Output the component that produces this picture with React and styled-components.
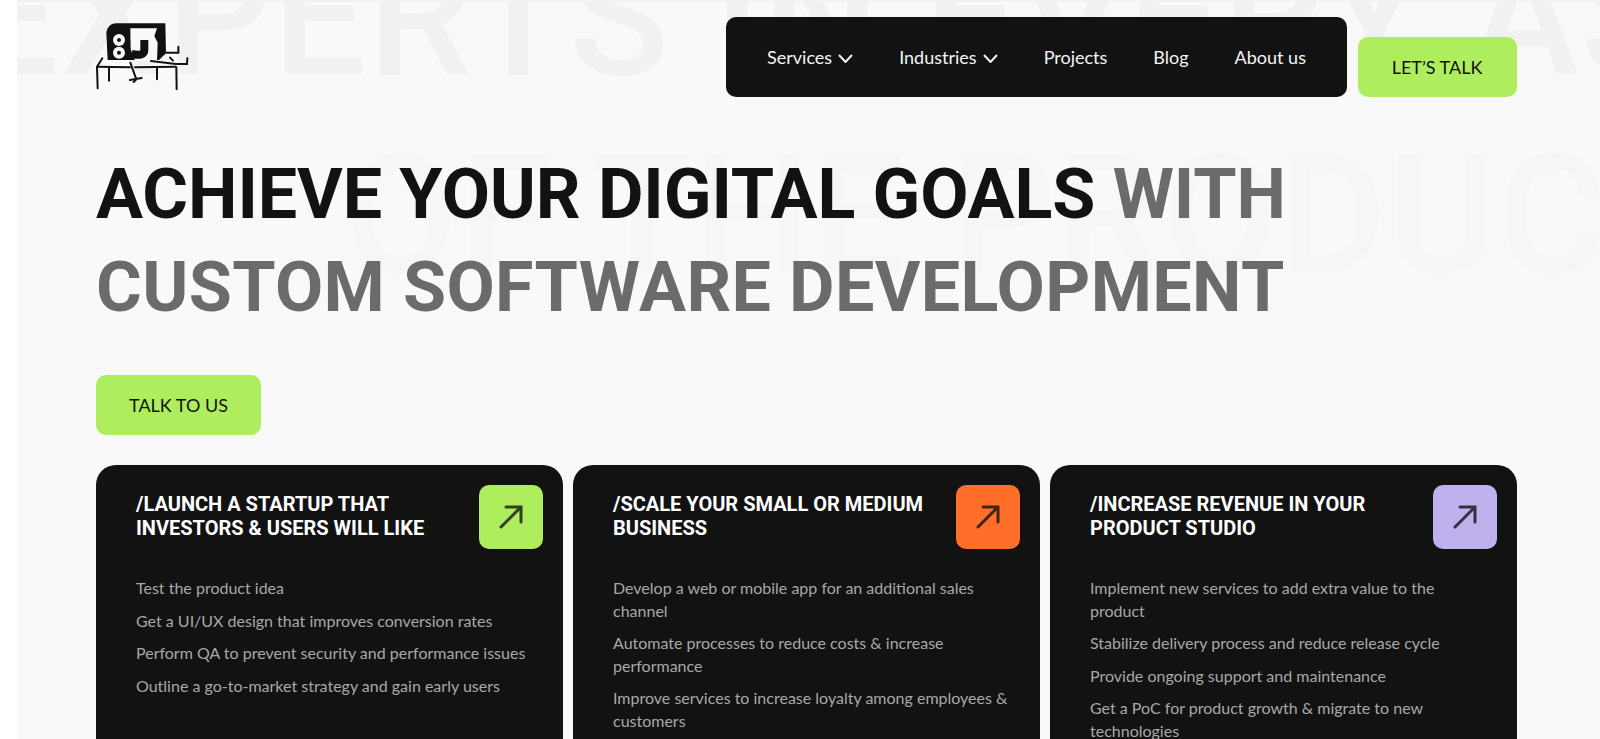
import React from "react";
import styled, { createGlobalStyle } from "styled-components";

const GlobalStyle = createGlobalStyle`
  html, body {
    margin: 0;
    padding: 0;
    height: 100%;
    background: #fff;
    overflow: hidden;
  }
  #root {
    height: 100%;
  }
  * {
    box-sizing: border-box;
  }
`;

const cards = [
  {
    title: "/LAUNCH A STARTUP THAT INVESTORS & USERS WILL LIKE",
    color: "#aeee5e",
    items: [
      "Test the product idea",
      "Get a UI/UX design that improves conversion rates",
      "Perform QA to prevent security and performance issues",
      "Outline a go-to-market strategy and gain early users",
    ],
  },
  {
    title: "/SCALE YOUR SMALL OR MEDIUM BUSINESS",
    color: "#ff6f29",
    items: [
      "Develop a web or mobile app for an additional sales channel",
      "Automate processes to reduce costs & increase performance",
      "Improve services to increase loyalty among employees & customers",
    ],
  },
  {
    title: "/INCREASE REVENUE IN YOUR PRODUCT STUDIO",
    color: "#bfb0ee",
    items: [
      "Implement new services to add extra value to the product",
      "Stabilize delivery process and reduce release cycle",
      "Provide ongoing support and maintenance",
      "Get a PoC for product growth & migrate to new technologies",
    ],
  },
];

function Logo() {
  return (
    <LogoSvg viewBox="30 30 285 210" aria-label="logo">
      <path
        d="M68 150 L64 68 Q68 42 92 40 L241 40 L243 130 L222 150 Z"
        fill="#111"
      />
      <path
        d="M136 55 H216 L208 78 L218 98 L216 152 H150 L137 118 Z"
        fill="#f9f9f9"
      />
      <path d="M178 90 V120 Q178 140 140 132" fill="none" stroke="#111" strokeWidth="24" />
      <circle cx="102" cy="90" r="18" fill="#f9f9f9" />
      <circle cx="102" cy="128" r="18" fill="#f9f9f9" />
      <circle cx="102" cy="90" r="6" fill="#111" />
      <circle cx="102" cy="128" r="6" fill="#111" />
      <g fill="none" stroke="#111" strokeWidth="6" strokeLinecap="round">
        <path d="M38 235 L36 170 L52 145" />
        <path d="M36 170 L135 172 M150 172 L272 170" />
        <path d="M72 172 L72 212" />
        <path d="M216 172 L216 208" />
        <path d="M274 172 L275 238" />
        <path d="M198 153 L272 162 L306 162 L307 145" />
        <path d="M245 128 L280 128 L280 110" />
        <path d="M255 143 L264 152" />
        <path d="M136 158 L154 208 M135 210 L170 204 M154 208 L146 216" />
      </g>
    </LogoSvg>
  );
}

function Arrow() {
  return (
    <ArrowSvg viewBox="0 0 24 24">
      <path d="M2 22 L22 2 M7 2 H22 V17" />
    </ArrowSvg>
  );
}

function Chevron() {
  return (
    <ChevronSvg viewBox="0 0 15 9">
      <path d="M1 1 L7.5 8 L14 1" />
    </ChevronSvg>
  );
}

export default function App() {
  return (
    <Page>
      <GlobalStyle />
      <Watermark>
        <WatermarkLine>EXPERTS IN EVERY ASPECT</WatermarkLine>
        <WatermarkLine $light>OF THE PRODUCT</WatermarkLine>
      </Watermark>
      <Content>
        <Header>
          <Logo />
          <HeaderRight>
            <Nav>
              <NavItem>
                Services <Chevron />
              </NavItem>
              <NavItem>
                Industries <Chevron />
              </NavItem>
              <NavItem>Projects</NavItem>
              <NavItem>Blog</NavItem>
              <NavItem>About us</NavItem>
            </Nav>
            <GreenButton $width="159px">LET’S TALK</GreenButton>
          </HeaderRight>
        </Header>
        <Hero>
          ACHIEVE YOUR DIGITAL GOALS <Muted>WITH</Muted>
          <br />
          <Muted $spaced>CUSTOM SOFTWARE DEVELOPMENT</Muted>
        </Hero>
        <GreenButton $width="165px">TALK TO US</GreenButton>
        <Cards>
          {cards.map((card) => (
            <Card key={card.title}>
              <CardHead>
                <CardTitle>{card.title}</CardTitle>
                <ArrowBox $color={card.color}>
                  <Arrow />
                </ArrowBox>
              </CardHead>
              <CardList>
                {card.items.map((item) => (
                  <li key={item}>{item}</li>
                ))}
              </CardList>
            </Card>
          ))}
        </Cards>
      </Content>
    </Page>
  );
}

const Page = styled.div`
  position: relative;
  height: 739px;
  margin-left: 17px;
  overflow: hidden;
  background: #f9f9f9;
  border-top: 2px solid #f6eff8;
`;

const Watermark = styled.div`
  position: absolute;
  top: -83px;
  left: -52px;
  width: 1750px;
  font-family: "Roboto", sans-serif;
  font-weight: 500;
  font-size: 165px;
  line-height: 198px;
  letter-spacing: 1.8px;
  white-space: nowrap;
`;

const WatermarkLine = styled.div`
  color: ${(p) => (p.$light ? "#f6f6f6" : "#f1f1f1")};
  padding-left: ${(p) => (p.$light ? "379px" : "0")};
`;

const Content = styled.div`
  position: relative;
  padding: 15px 83.5px 0 79px;
`;

const Header = styled.header`
  display: flex;
  justify-content: space-between;
  align-items: flex-start;
`;

const LogoSvg = styled.svg`
  width: 95px;
  height: 70px;
  margin: 3px 0 0 -1px;
`;

const HeaderRight = styled.div`
  display: flex;
  align-items: flex-end;
  gap: 10.5px;
`;

const Nav = styled.nav`
  display: flex;
  align-items: center;
  justify-content: center;
  gap: 46px;
  width: 621px;
  height: 80px;
  background: #121212;
  border-radius: 10px;
`;

const NavItem = styled.a`
  display: flex;
  align-items: center;
  gap: 6px;
  color: #f4f4f4;
  font-family: "Lato", sans-serif;
  font-size: 18px;
`;

const ChevronSvg = styled.svg`
  width: 15px;
  height: 9px;
  margin-top: 3px;
  fill: none;
  stroke: #f4f4f4;
  stroke-width: 2;
`;

const GreenButton = styled.button`
  display: block;
  width: ${(p) => p.$width};
  height: 60px;
  border: none;
  border-radius: 10px;
  background: #aeee5e;
  color: #121212;
  font-family: "Lato", sans-serif;
  font-size: 18px;
`;

const Hero = styled.h1`
  margin: 51px 0 41px;
  font-family: "Roboto", sans-serif;
  font-weight: 700;
  font-size: 70px;
  line-height: 93px;
  letter-spacing: -0.08px;
  color: #121212;
  white-space: nowrap;
`;

const Muted = styled.span`
  color: #6b6b6b;
  letter-spacing: ${(p) => (p.$spaced ? "0.37px" : "inherit")};
`;

const Cards = styled.div`
  display: grid;
  grid-template-columns: repeat(3, 1fr);
  gap: 10.5px;
  margin-top: 30px;
`;

const Card = styled.article`
  height: 400px;
  padding: 20px 20px 20px 40px;
  background: #121212;
  border-radius: 20px;
`;

const CardHead = styled.div`
  display: flex;
  justify-content: space-between;
  align-items: flex-start;
  gap: 24px;
`;

const CardTitle = styled.h3`
  margin: 7px 0 0;
  max-width: 320px;
  font-family: "Roboto", sans-serif;
  font-weight: 700;
  font-size: 20px;
  line-height: 24px;
  color: #fff;
`;

const ArrowBox = styled.div`
  flex: none;
  display: flex;
  align-items: center;
  justify-content: center;
  width: 64px;
  height: 64px;
  border-radius: 10px;
  background: ${(p) => p.$color};
`;

const ArrowSvg = styled.svg`
  width: 24px;
  height: 24px;
  fill: none;
  stroke: #121212;
  stroke-opacity: 0.8;
  stroke-width: 3;
  stroke-linecap: round;
`;

const CardList = styled.ul`
  display: flex;
  flex-direction: column;
  gap: 10px;
  margin: 28px 0 0;
  padding: 0 10px 0 0;
  list-style: none;
  font-family: "Lato", sans-serif;
  font-size: 16px;
  line-height: 22.6px;
  color: #a8a8a8;
`;
